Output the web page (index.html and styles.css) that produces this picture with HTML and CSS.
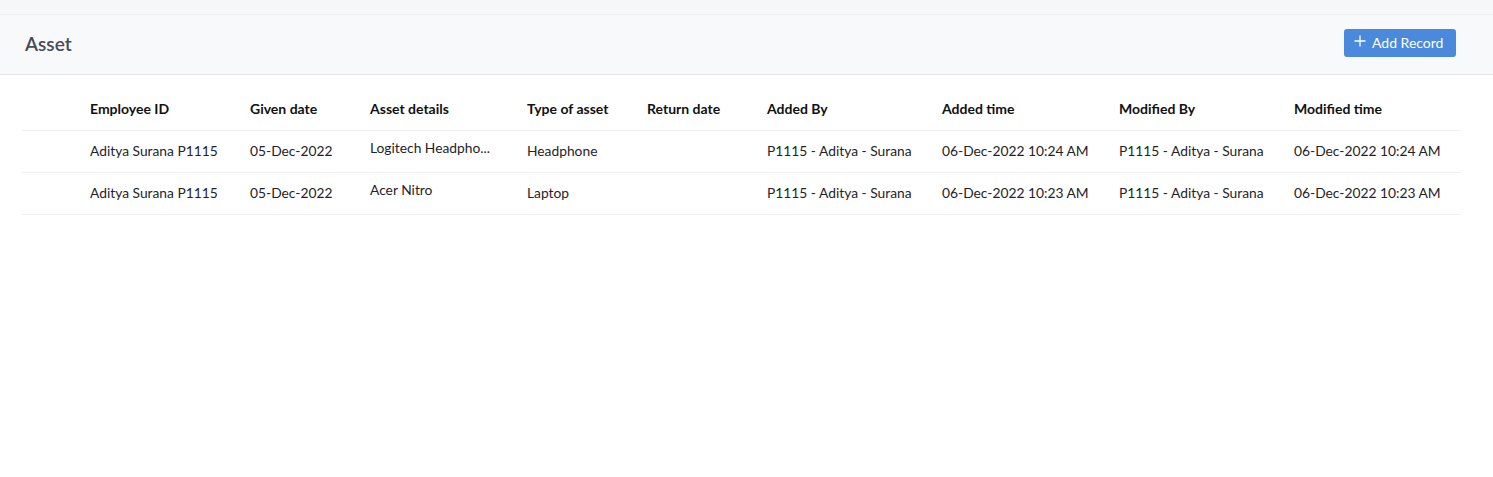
FILE: index.html
```html
<!DOCTYPE html>
<html>
<head>
<meta charset="utf-8">
<link rel="stylesheet" href="styles.css">
</head>
<body>
<div class="topstrip"></div>
<header class="pagehead">
  <h1 class="title">Asset</h1>
  <button class="addbtn">
    <svg width="12" height="12" viewBox="0 0 12 12"><path d="M6 0.5V11.5M0.5 6H11.5" stroke="#fff" stroke-width="1.3" fill="none"/></svg>
    <span>Add Record</span>
  </button>
</header>
<main class="content">
  <table class="grid">
    <colgroup>
      <col style="width:56px"><col style="width:160px"><col style="width:120px"><col style="width:157px"><col style="width:120px"><col style="width:120px"><col style="width:175px"><col style="width:177px"><col style="width:175px"><col>
    </colgroup>
    <thead>
      <tr>
        <th></th><th>Employee ID</th><th>Given date</th><th>Asset details</th><th>Type of asset</th><th>Return date</th><th>Added By</th><th>Added time</th><th>Modified By</th><th>Modified time</th>
      </tr>
    </thead>
    <tbody>
      <tr>
        <td></td><td>Aditya Surana P1115</td><td>05-Dec-2022</td><td class="top">Logitech Headpho...</td><td>Headphone</td><td></td><td>P1115 - Aditya - Surana</td><td>06-Dec-2022 10:24 AM</td><td>P1115 - Aditya - Surana</td><td>06-Dec-2022 10:24 AM</td>
      </tr>
      <tr>
        <td></td><td>Aditya Surana P1115</td><td>05-Dec-2022</td><td class="top">Acer Nitro</td><td>Laptop</td><td></td><td>P1115 - Aditya - Surana</td><td>06-Dec-2022 10:23 AM</td><td>P1115 - Aditya - Surana</td><td>06-Dec-2022 10:23 AM</td>
      </tr>
    </tbody>
  </table>
</main>
</body>
</html>
```
FILE: styles.css
```css
* { box-sizing: border-box; }
html, body { margin: 0; padding: 0; background: #fff; }
body { font-family: Lato, "Liberation Sans", sans-serif; color: #1f2328; }
.topstrip { height: 15px; background: #f6f7f9; border-bottom: 1px solid #eceef1; }
.pagehead {
  height: 60px;
  background: #f8f9fb;
  border-bottom: 1px solid #e2e4e7;
  display: flex;
  align-items: center;
  justify-content: space-between;
  padding: 0 37px 2px 25px;
}
.title { margin: 0; font-size: 19px; font-weight: 600; color: #474c55; }
.addbtn {
  display: flex; align-items: center; gap: 6px;
  height: 28px; width: 112px;
  margin-top: -1px;
  padding: 0 0 2px 10px;
  background: #4a89dc; color: #fff;
  border: none; border-radius: 3px;
  font-family: Lato, "Liberation Sans", sans-serif; font-size: 14px;
}
.addbtn svg { margin-top: -2px; }
.content { padding: 13px 32px 0 22px; }
.grid { width: 1439px; border-collapse: collapse; table-layout: fixed; font-size: 14px; }
.grid th { text-align: left; font-weight: 700; height: 42px; padding: 0 12px; border-bottom: 1px solid #f0f1f3; color: #111; }
.grid td { height: 42px; padding: 0 12px 2px; border-bottom: 1px solid #f0f1f3; white-space: nowrap; color: #1f2328; font-size: 13.8px; }
.grid td.top { padding-bottom: 8px; }
```
